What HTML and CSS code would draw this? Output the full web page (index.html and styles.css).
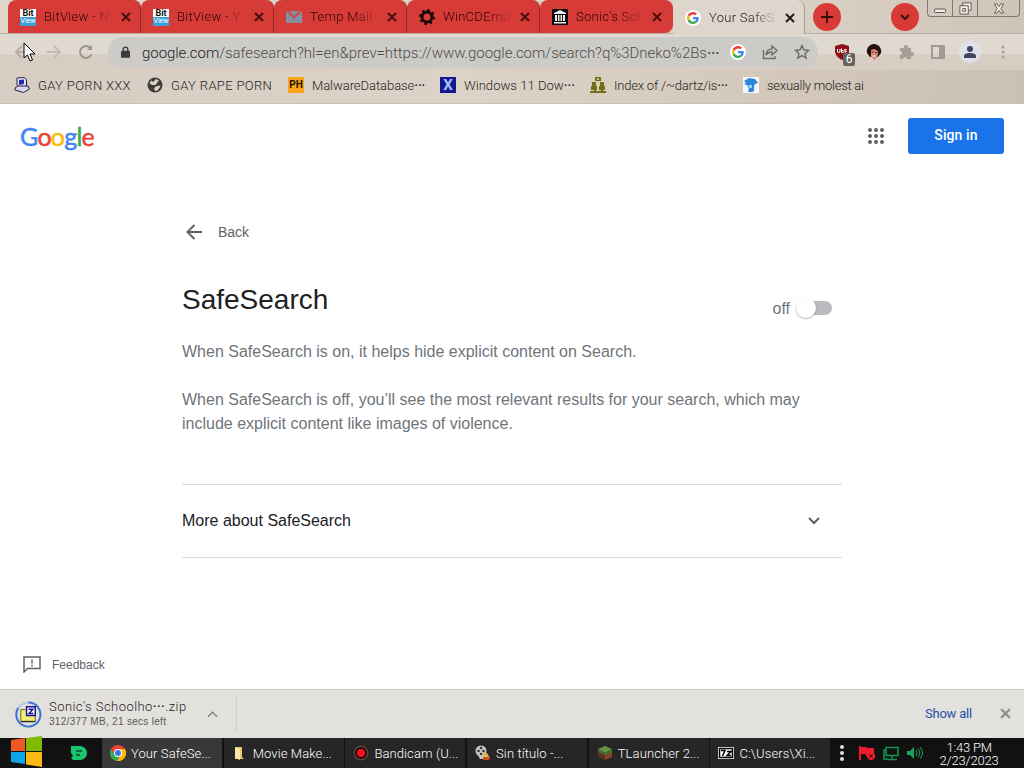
FILE: index.html
```
<!DOCTYPE html>
<html lang="en">
  <head>
    <meta charset="UTF-8" />
    <title>Your SafeSearch setting</title>
    <link rel="stylesheet" href="styles.css">
  </head>

  <body>
    <svg class="defs" width="0" height="0">
      <symbol id="x" viewBox="0 0 10 10"><path d="M1 1l8 8M9 1L1 9" fill="none" stroke="currentColor" stroke-width="2"/></symbol>
      <symbol id="g" viewBox="0 0 48 48">
        <path fill="#ea4335" d="M24 9.500c3.500 0 6.700 1.200 9.200 3.600l6.900-6.900C35.900 2.400 30.500 0 24 0 14.600 0 6.500 5.400 2.600 13.200l8 6.200C12.400 13.700 17.700 9.500 24 9.500z"/>
        <path fill="#4285f4" d="M47 24.600c0-1.600-.2-3.100-.4-4.600H24v9h12.900c-.6 3-2.200 5.500-4.700 7.200l7.700 6C44.400 38 47 31.800 47 24.600z"/>
        <path fill="#fbbc05" d="M10.500 28.600a14.500 14.500 0 0 1 0-9.200l-8-6.200a24 24 0 0 0 0 21.600z"/>
        <path fill="#34a853" d="M24 48c6.500 0 11.900-2.100 15.900-5.800l-7.700-6c-2.200 1.500-4.900 2.300-8.200 2.300-6.300 0-11.600-4.200-13.500-9.900l-8 6.200C6.500 42.600 14.600 48 24 48z"/>
      </symbol>
    </svg>

    <div class="browser">
      <div class="tabstrip">
        <div class="tab">
          <span class="bitview"><b>Bit</b><i>View</i></span>
          <span class="title">BitView - N</span>
          <svg class="close"><use href="#x"/></svg>
        </div>
        <div class="tab">
          <span class="bitview"><b>Bit</b><i>View</i></span>
          <span class="title">BitView - Y</span>
          <svg class="close"><use href="#x"/></svg>
        </div>
        <div class="tab">
          <svg class="fav" viewBox="0 0 16 16"><path fill="#8c8c99" d="M0 2h16v12H0z"/><path fill="#c44a4c" d="M0 2h3l5 5 5-5h3L8 10z"/><path fill="#7796b8" d="M0 5l4 4-4 5zM16 5l-4 4 4 5z"/></svg>
          <span class="title">Temp Mail -</span>
          <svg class="close"><use href="#x"/></svg>
        </div>
        <div class="tab">
          <svg class="fav" viewBox="0 0 16 16"><circle cx="8" cy="8" r="5" fill="none" stroke="#180808" stroke-width="3"/><circle cx="8" cy="8" r="7" fill="none" stroke="#180808" stroke-width="2" stroke-dasharray="2.5 3"/></svg>
          <span class="title">WinCDEmu</span>
          <svg class="close"><use href="#x"/></svg>
        </div>
        <div class="tab last">
          <svg class="fav" viewBox="0 0 16 16"><path fill="#0a0a0a" d="M0 0h16v16H0z"/><path fill="#eee" d="M2 4l6-3 6 3v1H2zM3 6h2v6H3zM6 6h1.500v6H6zM8.500 6H10v6H8.500zM11 6h2v6h-2zM2 13h12v1.500H2z"/></svg>
          <span class="title">Sonic's Sch</span>
          <svg class="close"><use href="#x"/></svg>
        </div>
        <div class="tab active">
          <span class="gwrap"><svg><use href="#g"/></svg></span>
          <span class="title">Your SafeS</span>
          <svg class="close"><use href="#x"/></svg>
        </div>
        <span class="round"><svg viewBox="0 0 14 14"><path d="M7 1v12M1 7h12"/></svg></span>
        <span class="round search"><svg viewBox="0 0 14 14"><path d="M3 5l4 4 4-4"/></svg></span>
        <div class="winbtns">
          <span class="min"><svg viewBox="0 0 12 6"><rect x=".5" y="1" width="11" height="3.500" rx="1"/></svg></span>
          <span class="max"><svg viewBox="0 0 14 14"><path d="M4 4V1h9v8h-3"/><path d="M1 4h9v9H1zM4 7h3v3H4z"/></svg></span>
          <span class="cls"><svg viewBox="0 0 12 12"><path d="M1 1h3l2 3 2-3h3L8 6l3 5H8L6 8l-2 3H1l3-5z"/></svg></span>
        </div>
      </div>

      <div class="toolbar">
        <svg class="nav back" viewBox="0 0 16 16"><path d="M15 8H2M8 2L2 8l6 6"/></svg>
        <svg class="nav fwd" viewBox="0 0 16 16"><path d="M1 8h13M8 2l6 6-6 6"/></svg>
        <svg class="nav reload" viewBox="0 0 16 16"><path d="M13.500 10.500A6 6 0 1 1 12.500 4"/><path d="M14 1v5H9z" class="solid"/></svg>
        <div class="omnibox">
          <svg class="lock" viewBox="0 0 10 13"><rect y="5" width="10" height="8" rx="1" fill="#3c3c3f"/><path d="M2.500 6V3.500a2.500 2.500 0 0 1 5 0V6" fill="none" stroke="#3c3c3f" stroke-width="1.500"/></svg>
          <span class="url"><em>google.com</em>/safesearch?hl=en&amp;prev=https://www.google.com/search?q%3Dneko%2Bs<b>···</b></span>
          <span class="gwrap"><svg><use href="#g"/></svg></span>
          <svg class="tool share" viewBox="0 0 16 16"><path d="M1.500 6v8.500H13V12M4 11c.5-4 2.500-6 6-6V2l5 4.500L10 11V8c-3 0-4.500.8-6 3z"/></svg>
          <svg class="tool star" viewBox="0 0 16 16"><path d="M8 1.500l1.900 4.300 4.700.5-3.500 3.100 1 4.600L8 11.600 3.900 14l1-4.600L1.400 6.300l4.700-.5z"/></svg>
        </div>
        <div class="ext">
          <span class="ublock">
            <svg viewBox="0 0 16 16"><path fill="#8f1118" d="M8 0l7 2v5c0 4-3 7-7 9-4-2-7-5-7-9V2z"/><path d="M3.500 5v3q1 1.200 2.500 0V5M7.500 4.500v4h1.700q1-1 0-2H7.500M12.500 5.500q-2-.8-2 .5t2 1q0 1.700-2 1" fill="none" stroke="#fff"/></svg>
            <b>6</b>
          </span>
          <svg class="face" viewBox="0 0 16 16"><path fill="#24110e" d="M3 2q5-4 10 0 3 3 2 7l-3 4H4L1 9Q0 5 3 2z"/><path fill="#d58e73" d="M5 6l3-1 4 2-.5 6-3 3-3.500-3z"/><path d="M5.500 8h2M9 8.500h2" stroke="#4a1917"/><path d="M6.500 12h3" stroke="#fff"/></svg>
          <svg class="puzzle" viewBox="0 0 16 16"><path fill="#a69e97" d="M2 4h4a2.200 2.200 0 1 1 4 0h3v4a2.200 2.200 0 1 1 0 4v3h-4a2 2 0 0 0-4 0H2v-4a2 2 0 0 0 0-4z"/></svg>
          <svg class="panel" viewBox="0 0 16 16"><path d="M2 2h12v12H2z" fill="none" stroke="#a29b95" stroke-width="2"/><path fill="#a29b95" d="M9 2h5v12H9z"/></svg>
          <span class="profile"><svg viewBox="0 0 14 14"><circle cx="7" cy="4" r="3"/><path d="M1 13v-2q0-3 6-3t6 3v2z"/></svg></span>
          <svg class="more" viewBox="0 0 4 16"><circle cx="2" cy="3" r="1.500"/><circle cx="2" cy="8" r="1.500"/><circle cx="2" cy="13" r="1.500"/></svg>
        </div>
      </div>

      <div class="bookmarks">
        <div class="bm b1">
          <svg viewBox="0 0 16 16"><path fill="#e8e4f2" stroke="#241f48" d="M3 1l7-.5 2.500 2V9l-6 2L3 8z"/><path fill="#1e2cae" d="M5 3l5-.5V7L5 8z"/><path fill="#d8d3e8" stroke="#241f48" d="M1 11l3-2 10 0 1.500 3-6 3.500L1 13z"/></svg>
          <span>GAY PORN XXX</span>
        </div>
        <div class="bm b2">
          <svg viewBox="0 0 16 16"><circle cx="8" cy="8" r="7.500" fill="#3f3c3b"/><path fill="#d9d0c5" d="M9 2l3 1.500L10 6l-1.500 2H5L2.500 6.500 4 3.500l2 1.500zM8.500 9.500l4-1 1 1-3 4-2.500.5-1-2.500z"/></svg>
          <span>GAY RAPE PORN</span>
        </div>
        <div class="bm b3"><b class="ph">PH</b><span>MalwareDatabase<em>···</em></span></div>
        <div class="bm b4"><b class="xx">X</b><span>Windows 11 Dow<em>···</em></span></div>
        <div class="bm b5">
          <svg viewBox="0 0 16 16"><path fill="#756e17" d="M5 0h6v4H5zM2 5h4v4H2zM10 5h4v4h-4zM1 9h6v4H1zM9 9h6v4H9zM0 14h16v2H0zM4 13h2v2H4zM11 13h2v2h-2z"/><path fill="#d9d0c5" d="M7 1.500h2V3H7z"/></svg>
          <span>Index of /~dartz/is<em>···</em></span>
        </div>
        <div class="bm b6">
          <svg viewBox="0 0 16 16"><path fill="#f4f8fb" d="M0 0h16v16H0z"/><path fill="#2b86d9" d="M1 4l5-3 6 1 3 4-3 1-1 2v5l-2 1H5l1-3-2-4-3-1 2-1z"/><path fill="#8fd0f5" d="M5 8h4v3H6z"/></svg>
          <span>sexually molest ai</span>
        </div>
      </div>

      <div class="page">
        <header>
          <div class="logo"><span class="c1">G</span><span class="c2">o</span><span class="c3">o</span><span class="c1">g</span><span class="c4">l</span><span class="c2">e</span></div>
          <svg class="apps" viewBox="0 0 16 16"><g fill="#5f6368"><circle cx="2" cy="2" r="2"/><circle cx="8" cy="2" r="2"/><circle cx="14" cy="2" r="2"/><circle cx="2" cy="8" r="2"/><circle cx="8" cy="8" r="2"/><circle cx="14" cy="8" r="2"/><circle cx="2" cy="14" r="2"/><circle cx="8" cy="14" r="2"/><circle cx="14" cy="14" r="2"/></g></svg>
          <button class="signin">Sign in</button>
        </header>
        <main>
          <a class="goback"><svg viewBox="0 0 16 16"><path d="M16 8H2M8.500 1L1.500 8l7 7"/></svg>Back</a>
          <div class="heading">
            <h1>SafeSearch</h1>
            <div class="state">off<span class="switch"><i></i></span></div>
          </div>
          <p>When SafeSearch is on, it helps hide explicit content on Search.</p>
          <p>When SafeSearch is off, you’ll see the most relevant results for your search, which may include explicit content like images of violence.</p>
          <div class="about">More about SafeSearch<svg viewBox="0 0 12 8"><path d="M1 1l5 5 5-5"/></svg></div>
        </main>
        <div class="feedback"><svg viewBox="0 0 18 17"><path d="M1 16V1h16v11.500H4.500z"/><path d="M9 3.500v4M9 8.800v1.800"/></svg>Feedback</div>
      </div>

      <div class="downloads">
        <svg class="ring" viewBox="0 0 28 28"><circle cx="14" cy="14" r="12.500" fill="none" stroke="#b9c8e0" stroke-width="2"/><path d="M14 1.500A12.500 12.500 0 1 1 3.500 7" fill="none" stroke="#3c74ce" stroke-width="2"/><path fill="#f3ef75" stroke="#6b6825" d="M6 9h5l2 2h8v10H6z"/><path stroke="#111" d="M6 21.500h15"/><path fill="#fff" stroke="#15158b" stroke-width="1.500" d="M12 6h9v9h-9z"/><path fill="none" stroke="#15158b" stroke-width="1.500" d="M14 8.500h4.500L14.500 13H19"/></svg>
        <div class="file"><span class="name">Sonic's Schoolho<b>···</b>.zip</span><span class="left">312/377 MB, 21 secs left</span></div>
        <svg class="up" viewBox="0 0 12 8"><path d="M1 7l5-5 5 5"/></svg>
        <span class="rule"></span>
        <a class="showall">Show all</a>
        <svg class="closebar"><use href="#x"/></svg>
      </div>
    </div>

    <div class="taskbar">
      <svg class="start" viewBox="0 0 33 32"><path fill="#ee5a24" d="M1 4l14-2v13H1z"/><path fill="#7fb900" d="M16 2l16-2v15H16z"/><path fill="#0ca5e8" d="M1 16h14v12L1 26z"/><path fill="#fdb913" d="M16 16h16v15l-16-2.500z"/></svg>
      <svg class="pinned" viewBox="0 0 16 14"><path fill="#19c46c" d="M0 0h9a7 7 0 0 1 0 14H2l-2-2 2-2-2-3z"/><path d="M5 5h6M5 9h4" stroke="#0b4528" stroke-width="1.500"/></svg>
      <div class="task current">
        <svg viewBox="0 0 16 16"><circle cx="8" cy="8" r="8" fill="#ea4335"/><path fill="#fbbc05" d="M8 4h7A8 8 0 0 1 7 16l4-6z"/><path fill="#34a853" d="M1 4l5 7 3 1-2 4A8 8 0 0 1 1 4z"/><circle cx="8" cy="8" r="4" fill="#fff"/><circle cx="8" cy="8" r="3" fill="#3b78e7"/></svg>
        <span>Your SafeSe...</span>
      </div>
      <div class="task">
        <svg viewBox="0 0 16 16"><path fill="#e8c86b" d="M3 2h7v10l2 2H3z"/><path fill="#f8e7a8" d="M3 2l5 2v11l-5-2z"/></svg>
        <span>Movie Make...</span>
      </div>
      <div class="task">
        <svg viewBox="0 0 16 16"><circle cx="8" cy="8" r="7.500" fill="#5d4644"/><circle cx="8" cy="8" r="6" fill="#260808"/><circle cx="8" cy="8" r="4" fill="#ef151a"/></svg>
        <span>Bandicam (U...</span>
      </div>
      <div class="task">
        <svg viewBox="0 0 16 16"><circle cx="6" cy="6" r="5.500" fill="#c6c9c0"/><g fill="#333"><circle cx="6" cy="3" r="1.300"/><circle cx="3.500" cy="6" r="1.300"/><circle cx="8.500" cy="6" r="1.300"/><circle cx="6" cy="9" r="1.300"/></g><path fill="#c6c9c0" d="M3 10h6l1 4H5z"/><path fill="#d8b848" d="M8 7l4 1 3 5-6 1z"/><path fill="#d24b26" d="M8 12l7 0-1 3H8z"/></svg>
        <span>Sin título -...</span>
      </div>
      <div class="task">
        <svg viewBox="0 0 16 16"><path fill="#659443" d="M1 4l7-3 7 3-7 4z"/><path fill="#5c3020" d="M1 5l7 3v7l-7-3z"/><path fill="#83462d" d="M15 5L8 8v7l7-3z"/><path fill="#466d31" d="M1 4l7 4 7-4v3l-7 3-7-3z"/></svg>
        <span>TLauncher 2...</span>
      </div>
      <div class="task">
        <svg viewBox="0 0 16 16"><path fill="#fff" d="M0 2h16v12H0z"/><path fill="none" stroke="#000" stroke-width="1.500" d="M1.500 3.500h13v9h-13zM3 5.500h4L4.500 11M9 6.500h4l-4 4h4"/></svg>
        <span>C:\Users\Xi...</span>
      </div>
      <div class="tray">
        <svg class="dots" viewBox="0 0 4 16"><g fill="#ddd"><circle cx="2" cy="2" r="2"/><circle cx="2" cy="8" r="2"/><circle cx="2" cy="14" r="2"/></g></svg>
        <svg viewBox="0 0 16 16"><path fill="#ed1c2e" d="M0 1h2v14H0zM2 2h5l2 1h6v8H7L6 9H2z"/><circle cx="12" cy="11" r="4" fill="#ed1c2e"/><path d="M10 9l4 4M14 9l-4 4" stroke="#4a0a10"/></svg>
        <svg viewBox="0 0 16 16"><path d="M3 2.500h12v8H3zM9 11v3M5 14.500h9M3 5H1v9h4" fill="none" stroke="#169454" stroke-width="1.500"/></svg>
        <svg viewBox="0 0 16 16"><path fill="#18a35c" d="M0 6h3l4-4v12L3 10H0z"/><path d="M9 5q2 3 0 6M11 3.500q3.500 4.500 0 9M13 2q5 6 0 12" fill="none" stroke="#18a35c"/></svg>
      </div>
      <div class="clock"><span>1:43 PM</span><span>2/23/2023</span></div>
    </div>

    <svg class="cursor" viewBox="0 0 13 20"><path fill="#fff" stroke="#000" d="M1 1v15l3.500-3 2.500 6 2.500-1L7 12h5z"/></svg>
  </body>
</html>
```
FILE: styles.css
```
* {
  box-sizing: border-box;
  margin: 0;
  padding: 0;
}

html,
body {
  width: 1024px;
  height: 768px;
  overflow: hidden;
}

body {
  display: flex;
  flex-direction: column;
  background: #fff;
  font-family: Roboto, "Liberation Sans", sans-serif;
  font-size: 13px;
  color: #29221f;
}

svg {
  display: block;
  flex: none;
}

.defs {
  position: absolute;
}

.browser {
  display: flex;
  flex-direction: column;
  height: 738px;
  background: #dcd3c9;
}

/* tabs */
.tabstrip {
  display: flex;
  height: 34px;
  padding-left: 8px;
  background: linear-gradient(90deg, #ded5cb, #d8cfc5 80%, #cfc4b8);
  border-bottom: 1px solid #b8aea5;
}

.tab {
  display: flex;
  align-items: center;
  width: 133px;
  height: 33px;
  padding: 1px 9px 0 12px;
  background: #d63b37;
  border-right: 1px solid #912a27;
  border-radius: 8px 8px 0 0;
}

.tab.last {
  border-right: 0;
  padding-right: 11px;
  border-radius: 8px 8px 8px 0;
}

.tab.active {
  height: 34px;
  width: 132px;
  background: #ded6cd;
  border-right-color: #a49a91;
}

.fav {
  width: 16px;
  height: 16px;
}

.bitview {
  flex: none;
  width: 16px;
  height: 17px;
  background: #fff;
  font-size: 9px;
  line-height: 8px;
  text-align: center;
}

.bitview b,
.bitview i {
  display: block;
  font-style: normal;
  color: #111;
}

.bitview i {
  height: 9px;
  background: #3aa0dc;
  color: #fff;
  font-size: 7px;
}

.title {
  flex: 1;
  margin: 0 4px 0 8px;
  height: 18px;
  line-height: 18px;
  font-weight: 300;
  letter-spacing: .3px;
  white-space: nowrap;
  color: #2a0504;
  -webkit-mask-image: linear-gradient(90deg, #000 60%, transparent 95%);
  mask-image: linear-gradient(90deg, #000 60%, transparent 95%);
}

.close {
  width: 10px;
  height: 10px;
  color: #47100d;
}

.active .title,
.active .close {
  color: #1f1b1a;
}

.gwrap {
  display: flex;
  align-items: center;
  justify-content: center;
  flex: none;
  width: 16px;
  height: 16px;
  border-radius: 50%;
  background: #fff;
}

.gwrap svg {
  width: 12px;
  height: 12px;
}

.round {
  display: flex;
  align-items: center;
  justify-content: center;
  flex: none;
  width: 28px;
  height: 28px;
  margin: 3px 0 0 8px;
  border-radius: 50%;
  background: #d93a36;
}

.round svg {
  width: 14px;
  height: 14px;
  fill: none;
  stroke: #3c0e0c;
  stroke-width: 2;
}

.round.search {
  margin-left: 50px;
}

.winbtns {
  display: flex;
  margin-left: 8px;
  width: 93px;
  height: 17px;
  border: 1px solid #81776e;
  border-top: 0;
  border-radius: 0 0 4px 4px;
}

.winbtns span {
  display: flex;
  align-items: center;
  justify-content: center;
}

.winbtns svg {
  fill: #f1ece5;
  stroke: #5d5751;
}

.min,
.max {
  width: 25px;
  border-right: 1px solid #81776e;
}

.cls {
  flex: 1;
}

.min svg {
  width: 12px;
  height: 6px;
  margin-top: 5px;
}

.max svg {
  width: 13px;
  height: 13px;
}

.cls svg {
  width: 12px;
  height: 11px;
}

/* address bar */
.toolbar {
  display: flex;
  align-items: center;
  height: 36px;
  padding-left: 14px;
  background: linear-gradient(#e0d9d0 0 55%, #d7cdc2 58%);
}

.nav {
  width: 16px;
  height: 16px;
  margin-right: 16px;
  fill: none;
  stroke: #b5aca4;
  stroke-width: 2;
}

.nav.fwd {
  stroke: #c3bab1;
}

.nav.reload {
  stroke: #9b958f;
  margin-right: 14px;
}

.nav .solid {
  fill: #9b958f;
  stroke: none;
}

.omnibox {
  display: flex;
  align-items: center;
  width: 710px;
  height: 30px;
  padding-left: 13px;
  border-radius: 15px;
  background: #cdcbc7;
}

.lock {
  width: 9px;
  height: 12px;
}

.url {
  width: 588px;
  margin-left: 12px;
  padding-top: 1px;
  font-size: 15px;
  line-height: 20px;
  font-weight: 300;
  letter-spacing: -.05px;
  white-space: nowrap;
  color: #4d4b4a;
}

.url em {
  font-style: normal;
  color: #201e1e;
}

.url b {
  font-weight: 500;
}

.tool {
  width: 16px;
  height: 16px;
  margin-left: 16px;
  fill: none;
  stroke: #6f6b68;
  stroke-width: 1.4;
}

.ext {
  display: flex;
  align-items: center;
  margin-left: 16px;
}

.ublock {
  position: relative;
}

.ublock svg,
.face,
.puzzle,
.panel {
  width: 16px;
  height: 16px;
}

.ublock b {
  position: absolute;
  left: 9px;
  top: 9px;
  width: 12px;
  height: 13px;
  border-radius: 2px;
  background: #66625f;
  color: #fff;
  font-size: 12px;
  line-height: 13px;
  font-weight: 400;
  text-align: center;
}

.face,
.puzzle,
.panel {
  margin-left: 16px;
}

.profile {
  display: flex;
  align-items: center;
  justify-content: center;
  width: 22px;
  height: 22px;
  margin-left: 13px;
  border-radius: 50%;
  background: #dfe0ea;
}

.profile svg {
  width: 14px;
  height: 14px;
  fill: #40465f;
}

.more {
  width: 4px;
  height: 16px;
  margin-left: 20px;
  fill: #a9a19a;
}

/* bookmarks */
.bookmarks {
  display: flex;
  align-items: center;
  height: 34px;
  padding: 0 0 3px 14px;
  background: linear-gradient(90deg, #d7cdc2, #dcd3c8 45%, #d3c8bb 75%, #cbc0b4);
  border-bottom: 1px solid #c9c1b8;
}

.bm {
  display: flex;
  align-items: center;
  flex: none;
  width: 133px;
  font-weight: 300;
  white-space: nowrap;
}

.bm svg,
.bm b {
  width: 16px;
  height: 16px;
  margin-right: 8px;
}

.bm b {
  flex: none;
  line-height: 16px;
  font-weight: 700;
  text-align: center;
  letter-spacing: 0;
}

.bm em {
  font-style: normal;
  font-weight: 500;
}

.b1 { letter-spacing: .35px; }
.b2 { width: 141px; letter-spacing: .35px; }
.b3 { width: 152px; letter-spacing: -.05px; }
.b4 { width: 150px; letter-spacing: .05px; }
.b5 { width: 153px; letter-spacing: -.2px; }
.b6 { letter-spacing: -.25px; }

.bm .ph {
  background: #faa51a;
  color: #1c1100;
  font-size: 10px;
}

.bm .xx {
  background: #101a8e;
  color: #a9c2ff;
  font-size: 15px;
}

/* page */
.page {
  display: flex;
  flex-direction: column;
  height: 585px;
  background: #fff;
  font-family: "Liberation Sans", Arial, sans-serif;
}

header {
  display: flex;
  align-items: center;
  height: 63px;
  padding: 0 20px;
}

.logo {
  flex: 1;
  font-family: Lato, sans-serif;
  font-size: 25px;
  line-height: 30px;
  letter-spacing: -.75px;
  -webkit-text-stroke: .5px currentColor;
}

.logo span {
  -webkit-text-stroke-color: currentColor;
}

.c1 { color: #4285f4; }
.c2 { color: #ea4335; }
.c3 { color: #fbbc05; }
.c4 { color: #34a853; }

.apps {
  width: 16px;
  height: 16px;
  margin-right: 24px;
}

.signin {
  width: 96px;
  height: 36px;
  padding-bottom: 2px;
  border: 0;
  border-radius: 3px;
  background: #1a73e8;
  color: #fff;
  font: 500 14px Roboto, sans-serif;
  letter-spacing: .1px;
}

main {
  width: 660px;
  margin-left: 182px;
  padding-top: 53px;
}

.goback {
  display: flex;
  align-items: center;
  height: 24px;
  padding-left: 4px;
  font-size: 14px;
  color: #5f6368;
}

.goback svg {
  width: 16px;
  height: 16px;
  margin-right: 16px;
  fill: none;
  stroke: #5f6368;
  stroke-width: 2;
}

.heading {
  display: flex;
  justify-content: space-between;
  height: 96px;
  padding-right: 10px;
}

h1 {
  margin-top: 38px;
  font-size: 28px;
  line-height: 36px;
  font-weight: 400;
  color: #202124;
}

.state {
  display: flex;
  align-items: center;
  height: 24px;
  margin-top: 53px;
  font-size: 16px;
  color: #70757a;
}

.switch {
  display: flex;
  align-items: center;
  width: 33px;
  height: 14px;
  margin: -2px 0 0 9px;
  border-radius: 7px;
  background: #b9bbbe;
}

.switch i {
  width: 20px;
  height: 20px;
  margin-left: -3px;
  border-radius: 50%;
  background: #fff;
  box-shadow: 0 1px 2px rgba(60, 64, 67, .4);
}

p {
  margin-bottom: 24px;
  font-size: 16px;
  line-height: 24px;
  color: #70757a;
}

.about {
  display: flex;
  align-items: center;
  justify-content: space-between;
  height: 74px;
  margin-top: 48px;
  padding-right: 22px;
  border-top: 1px solid #dadce0;
  border-bottom: 1px solid #dadce0;
  font-size: 16px;
  color: #202124;
}

.about svg {
  width: 12px;
  height: 8px;
  fill: none;
  stroke: #5f6368;
  stroke-width: 2;
}

.feedback {
  display: flex;
  align-items: center;
  margin: auto 0 16px 23px;
  font-size: 12px;
  color: #5f6368;
}

.feedback svg {
  width: 18px;
  height: 17px;
  margin-right: 11px;
  fill: none;
  stroke: #5f6368;
  stroke-width: 1.5;
}

/* downloads */
.downloads {
  display: flex;
  align-items: center;
  height: 49px;
  padding: 0 13px 0 15px;
  border-top: 1px solid #c9c9c7;
  background: #e2e1dd;
}

.ring {
  width: 27px;
  height: 27px;
}

.file {
  width: 152px;
  margin: -2px 0 0 7px;
  font-weight: 300;
}

.file span {
  display: block;
  white-space: nowrap;
}

.name {
  line-height: 17px;
  letter-spacing: .45px;
}

.name b {
  font-weight: 500;
}

.left {
  font-family: "Liberation Sans", sans-serif;
  font-size: 10px;
  line-height: 13px;
  letter-spacing: .3px;
  color: #5b5855;
}

.up {
  width: 11px;
  height: 8px;
  margin-left: 6px;
  fill: none;
  stroke: #85827f;
  stroke-width: 1.6;
}

.rule {
  width: 1px;
  height: 38px;
  margin-left: 18px;
  background: #cfcdca;
}

.showall {
  margin: -2px 0 0 auto;
  letter-spacing: -.2px;
  color: #2a50a8;
}

.closebar {
  width: 11px;
  height: 11px;
  margin: -2px 0 0 28px;
  color: #92908d;
}

/* taskbar */
.taskbar {
  display: flex;
  align-items: center;
  height: 30px;
  background: #111;
  color: #fff;
}

.start {
  width: 33px;
  height: 32px;
  margin: -2px 0 0 10px;
}

.pinned {
  width: 16px;
  height: 14px;
  margin: 0 15px 0 28px;
}

.task {
  display: flex;
  align-items: center;
  flex: none;
  width: 120px;
  height: 30px;
  margin-right: 1.7px;
  padding-left: 8px;
  background: #262626;
  font-weight: 300;
  letter-spacing: .1px;
  white-space: nowrap;
}

.task.current {
  background: #383838;
}

.task svg {
  width: 16px;
  height: 16px;
  margin-right: 5px;
}

.tray {
  display: flex;
  align-items: center;
  gap: 8px;
  margin-left: 8px;
}

.tray svg {
  width: 16px;
  height: 16px;
}

.tray .dots {
  width: 4px;
  margin-right: 7px;
}

.clock {
  display: flex;
  flex-direction: column;
  width: 60px;
  margin-left: 16px;
  padding-top: 1px;
  font-weight: 300;
  line-height: 13px;
  letter-spacing: -.2px;
  text-align: center;
  white-space: nowrap;
}

/* mouse pointer over the back button */
.cursor {
  position: absolute;
  left: 23px;
  top: 42px;
  width: 13px;
  height: 20px;
}
```
